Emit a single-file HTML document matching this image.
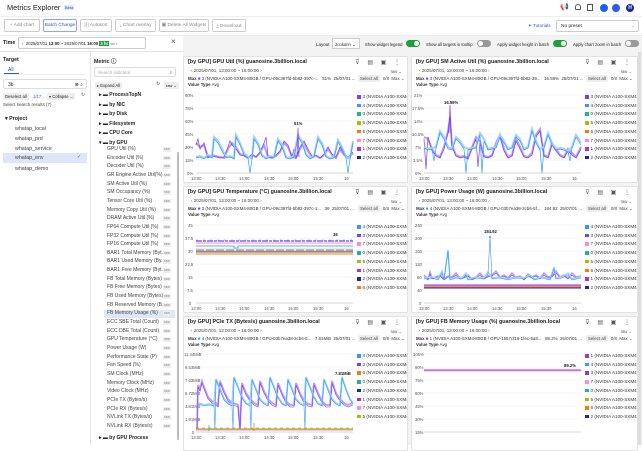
<!DOCTYPE html>
<html><head><meta charset="utf-8"><style>
*{box-sizing:border-box;margin:0;padding:0}
body{width:642px;height:445px;overflow:hidden;background:#fff;font-family:"Liberation Sans",sans-serif;color:#222;position:relative;font-size:5px}
.a{position:absolute;white-space:nowrap}
.btn{position:absolute;top:19px;height:13px;border:1px solid #ccc;border-radius:2px;font-size:4.8px;color:#888;display:flex;align-items:center;justify-content:center}
.tg{position:absolute;width:14px;height:7px;border-radius:4px;top:40px}
.tg i{position:absolute;top:1px;width:5px;height:5px;border-radius:3px;background:#fff}
.card{position:absolute;background:#fff;border:1px solid #e2e2e2;border-radius:2px;overflow:hidden}
.card .t{position:absolute;left:4px;top:2px;font-size:5.4px;font-weight:bold;color:#222;white-space:nowrap}
.card .d{position:absolute;left:7px;top:11px;font-size:4.5px;color:#444;white-space:nowrap}
.card .m{position:absolute;left:4px;top:19px;font-size:4.4px;color:#333;white-space:nowrap;width:168px;overflow:hidden}
.card .v{position:absolute;left:4px;top:25px;font-size:4.4px;color:#333}
.card .ic{position:absolute;right:4px;top:2px;font-size:6px;color:#555;letter-spacing:3px}
.card .raw{position:absolute;right:5px;top:12px;font-size:4.2px;color:#555}
.card .sel{position:absolute;left:174px;top:19px;font-size:4.4px;color:#444;white-space:nowrap}
.card .sel b{font-weight:normal;background:#eee;border-radius:2px;padding:1px 2px;margin-right:3px}
.lg{position:absolute;left:173px;font-size:4.6px;color:#333;white-space:nowrap}
.lg i{display:inline-block;width:3.5px;height:3.5px;margin-right:2px;vertical-align:-0.5px}
svg{position:absolute;left:0;top:0}
.ml{position:absolute;left:107px;width:68px;font-size:5px;color:#444;white-space:nowrap;height:8.65px;line-height:8.65px}
.ml span{position:absolute;left:56px;top:2px;font-size:3.6px;line-height:4.5px;color:#888;background:#eee;padding:0 1px}
</style></head><body>
<div class="a" style="left:7px;top:3px;font-size:7.4px;color:#222">Metrics Explorer</div>
<div class="a" style="left:64px;top:5px;font-size:4px;color:#2b55d8;background:#dfe6ff;padding:0 1px">Beta</div>
<div class="a" style="left:0;top:16px;width:642px;height:1px;background:#eee"></div>
<div class="a" style="left:560px;top:3px;font-size:7px;color:#444">&#128226;</div>
<div class="a" style="left:575px;top:4px;width:6px;height:6px;border:1px solid #555;border-radius:3px 3px 1px 1px"></div>
<div class="a" style="left:587px;top:4px;width:6px;height:7px;border:1px solid #555"></div>
<div class="a" style="left:600px;top:4px;width:8px;height:8px;border-radius:4px;background:#1f5ff0"></div>
<div class="a" style="left:612px;top:4px;width:8px;height:8px;border-radius:4px;background:#2a5cf5"></div>
<div class="a" style="left:626px;top:4px;width:8px;height:8px;border-radius:4px;background:#1a2a8c;color:#fff;font-size:5px;text-align:center;line-height:8px;font-weight:bold">H</div>
<div class="btn" style="left:4px;width:36px">+ Add chart</div>
<div class="btn" style="left:43px;width:34px;border-color:#8aa8f0;color:#2b55d8">Batch Change</div>
<div class="btn" style="left:80px;width:32px">|⟨| Autosort</div>
<div class="btn" style="left:115px;width:41px">⌞ Chart overlay</div>
<div class="btn" style="left:159px;width:50px">▣ Delete All Widgets</div>
<div class="btn" style="left:212px;width:34px">⤓ Download</div>
<div class="a" style="left:528px;top:23px;font-size:4.6px;color:#2b55d8">✦ Tutorials</div>
<div class="a" style="left:556px;top:20px;width:83px;height:12px;border:1px solid #ccc;border-radius:2px;font-size:4.8px;padding:3px 4px">No preset<span style="position:absolute;right:3px;color:#999">⌄</span></div>
<div class="a" style="left:0;top:35px;width:642px;height:1px;background:#eee"></div>
<div class="a" style="left:3px;top:40px;font-size:5.3px;font-weight:bold">Time</div>
<div class="a" style="left:18px;top:37px;width:128px;height:12px;border:1px solid #ccc;border-radius:2px;font-size:4.3px;padding:3px 3px">‹ &nbsp;2025/07/01 <b>13:00</b> ~ 2025/07/01 <b>16:00</b> <span style="background:#1ca03a;color:#fff;padding:0 1px;font-weight:bold">3 hr</span> ▭ ›</div>
<div class="a" style="left:171px;top:37px;font-size:8px;color:#555">×</div>
<div class="a" style="left:183px;top:36px;width:459px;height:409px;background:#f3f3f4"></div>
<div class="a" style="left:316px;top:42px;font-size:4.5px">Layout</div>
<div class="a" style="left:332px;top:38px;width:28px;height:11px;border:1px solid #ccc;background:#fff;font-size:4.2px;padding:3px 2px">2column ⌄</div>
<div class="a" style="left:365px;top:42px;font-size:4.2px">Show widget legend</div>
<div class="tg" style="left:406px;background:#1ca03a"><i style="left:8px"></i></div>
<div class="a" style="left:426px;top:42px;font-size:4.2px">Show all targets in tooltip</div>
<div class="tg" style="left:477px;background:#999"><i style="left:1px"></i></div>
<div class="a" style="left:497px;top:42px;font-size:4.2px">Apply widget height in batch</div>
<div class="tg" style="left:553px;background:#1ca03a"><i style="left:8px"></i></div>
<div class="a" style="left:573px;top:42px;font-size:4.2px">Apply chart zoom in batch</div>
<div class="tg" style="left:625px;background:#999"><i style="left:1px"></i></div>
<div class="a" style="left:0;top:51px;width:183px;height:1px;background:#e5e5e5"></div>
<div class="a" style="left:90px;top:52px;width:1px;height:393px;background:#e5e5e5"></div>
<div class="a" style="left:3px;top:57px;font-size:5.3px;font-weight:bold">Target</div>
<div class="a" style="left:8px;top:67px;font-size:5px;color:#2b55d8">All</div>
<div class="a" style="left:4px;top:73px;width:15px;height:1px;background:#2b55d8"></div>
<div class="a" style="left:4px;top:74px;width:82px;height:1px;background:#eee"></div>
<div class="a" style="left:3px;top:79px;width:84px;height:10px;border:1px solid #ddd;font-size:5px;padding:2px 4px;border-radius:2px">3b<span style="position:absolute;right:3px">⊗ ⌕</span></div>
<div class="a" style="left:3px;top:93px;font-size:4.2px;background:#eee;padding:1px 2px">Deselect all</div>
<div class="a" style="left:33px;top:94px;font-size:4.2px;color:#2b55d8">1/17</div>
<div class="a" style="left:47px;top:93px;font-size:4.2px;background:#eee;padding:1px 2px">▾ Collapse ...</div>
<div class="a" style="left:81px;top:92px;font-size:5px;color:#666">↻</div>
<div class="a" style="left:3px;top:102px;font-size:4.5px;color:#444">Select search results (7)</div>
<div class="a" style="left:5px;top:116px;font-size:5.3px;font-weight:bold">▾ Project</div>
<div class="a" style="left:15px;top:126px;font-size:5.3px;color:#444">whatap_local</div>
<div class="a" style="left:15px;top:136px;font-size:5.3px;color:#444">whatap_prd</div>
<div class="a" style="left:15px;top:146px;font-size:5.3px;color:#444">whatap_service</div>
<div class="a" style="left:3px;top:153px;width:84px;height:10px;background:#dfe6fb"></div>
<div class="a" style="left:15px;top:155px;font-size:5.3px;color:#444">whatap_env</div>
<div class="a" style="left:77px;top:154px;font-size:5px;color:#2b55d8">✓</div>
<div class="a" style="left:15px;top:166px;font-size:5.3px;color:#444">whatap_demo</div>
<div class="a" style="left:94px;top:57px;font-size:5.3px;font-weight:bold">Metric ⓘ</div>
<div class="a" style="left:94px;top:67px;width:82px;height:10px;border:1px solid #ddd;border-radius:2px;font-size:4.5px;color:#aaa;padding:2px 3px">Search indicator<span style="position:absolute;right:3px;color:#555">⌕</span></div>
<div class="a" style="left:95px;top:82px;font-size:4.2px;background:#eee;padding:1px 2px">▸ Expand All</div>
<div class="a" style="left:156px;top:81px;font-size:5px;color:#666">↻</div>
<div class="a" style="left:164px;top:82px;font-size:4px;background:#eee;padding:1px 2px">raw ⌄</div>
<div class="a" style="left:99px;top:91px;font-size:5px;font-weight:bold;line-height:9.5px">▸ ▬ ProcessTopN<br>▸ ▬ by NIC<br>▸ ▬ by Disk<br>▸ ▬ Filesystem<br>▸ ▬ CPU Core<br>▾ ▬ by GPU</div>
<div class="a" style="left:177px;top:152px;width:2px;height:288px;background:#bbb;border-radius:1px"></div>
<div class="a" style="left:104px;top:310px;width:71px;height:8px;background:#dfe6fb"></div>
<div class="ml" style="top:145px">GPU Util (%)<span>raw</span></div>
<div class="ml" style="top:153.65px">Encoder Util (%)<span>raw</span></div>
<div class="ml" style="top:162.3px">Decoder Util (%)<span>raw</span></div>
<div class="ml" style="top:170.95px">GR Engine Active Util(%)<span>raw</span></div>
<div class="ml" style="top:179.6px">SM Active Util (%)<span>raw</span></div>
<div class="ml" style="top:188.25px">SM Occupancy (%)<span>raw</span></div>
<div class="ml" style="top:196.9px">Tensor Core Util (%)<span>raw</span></div>
<div class="ml" style="top:205.55px">Memory Copy Util (%)<span>raw</span></div>
<div class="ml" style="top:214.2px">DRAM Active Util (%)<span>raw</span></div>
<div class="ml" style="top:222.85px">FP64 Compute Util (%)<span>raw</span></div>
<div class="ml" style="top:231.5px">FP32 Compute Util (%)<span>raw</span></div>
<div class="ml" style="top:240.15px">FP16 Compute Util (%)<span>raw</span></div>
<div class="ml" style="top:248.8px">BAR1 Total Memory (Byt...<span>raw</span></div>
<div class="ml" style="top:257.45px">BAR1 Used Memory (By...<span>raw</span></div>
<div class="ml" style="top:266.1px">BAR1 Free Memory (Byt...<span>raw</span></div>
<div class="ml" style="top:274.75px">FB Total Memory (Bytes)<span>raw</span></div>
<div class="ml" style="top:283.4px">FB Free Memory (Bytes)<span>raw</span></div>
<div class="ml" style="top:292.05px">FB Used Memory (Bytes)<span>raw</span></div>
<div class="ml" style="top:300.7px">FB Reserved Memory (B...<span>raw</span></div>
<div class="ml" style="top:309.35px">FB Memory Usage (%)<span>raw</span></div>
<div class="ml" style="top:318px">ECC SBE Total (Count)<span>raw</span></div>
<div class="ml" style="top:326.65px">ECC DBE Total (Count)<span>raw</span></div>
<div class="ml" style="top:335.3px">GPU Temperature (°C)<span>raw</span></div>
<div class="ml" style="top:343.95px">Power Usage (W)<span>raw</span></div>
<div class="ml" style="top:352.6px">Performance State (P)<span>raw</span></div>
<div class="ml" style="top:361.25px">Fan Speed (%)<span>raw</span></div>
<div class="ml" style="top:369.9px">SM Clock (MHz)<span>raw</span></div>
<div class="ml" style="top:378.55px">Memory Clock (MHz)<span>raw</span></div>
<div class="ml" style="top:387.2px">Video Clock (MHz)<span>raw</span></div>
<div class="ml" style="top:395.85px">PCIe TX (Bytes/s)<span>raw</span></div>
<div class="ml" style="top:404.5px">PCIe RX (Bytes/s)<span>raw</span></div>
<div class="ml" style="top:413.15px">NVLink TX (Bytes/s)<span>raw</span></div>
<div class="ml" style="top:421.8px">NVLink RX (Bytes/s)<span>raw</span></div>
<div class="a" style="left:99px;top:435px;font-size:5px;font-weight:bold">▸ ▬ by GPU Process</div>

<!-- CARD 1 -->
<div class="card" style="left:183px;top:56px;width:225px;height:127px">
<div class="t">[by GPU] GPU Util (%) guanosine.3billion.local</div><div class="ic">⊽ ▤ ▣ ⋮</div>
<div class="d">‹ 2025/07/01, 13:00:00 ~ 16:00:00 ›</div><div class="raw">raw ⌄</div>
<div class="m"><b>Max</b> <span style="color:#7b3ff2">■</span> 3 (NVIDIA A100-SXM4-80GB / GPU-09c397fd-5b82-397c-... &nbsp; 51% &nbsp;25/07/01 ...</div>
<div class="v"><b>Value Type</b> Avg</div>
<div class="sel"><b>Select all</b>0/8 &nbsp;Max ⌄</div>
<svg width="225" height="127" font-size="4.2" fill="#555" font-family="Liberation Sans">
<g stroke="#eee" stroke-width=".5"><line x1="12" y1="38" x2="169" y2="38"/><line x1="12" y1="51" x2="169" y2="51"/><line x1="12" y1="64" x2="169" y2="64"/><line x1="12" y1="77" x2="169" y2="77"/><line x1="12" y1="90" x2="169" y2="90"/><line x1="12" y1="103" x2="169" y2="103"/></g>
<line x1="12" y1="116" x2="169" y2="116" stroke="#aaa" stroke-width=".5"/>
<g><text x="1" y="40">90%</text><text x="1" y="53">75%</text><text x="1" y="66">60%</text><text x="1" y="79">45%</text><text x="1" y="92">30%</text><text x="1" y="105">15%</text><text x="3" y="118">0%</text>
<text x="7" y="123">13:00</text><text x="31" y="123">13:30</text><text x="55" y="123">14:00</text><text x="80" y="123">14:30</text><text x="104" y="123">15:00</text><text x="129" y="123">15:30</text><text x="160" y="123">16</text></g>
<polyline fill="none" stroke="#b89af8" stroke-width="2" points="12,86 16,90 20,88 24,100 28,98 32,99 36,100 40,101 44,92 48,86 52,90 56,97 60,98 64,101 68,98 72,100 76,96 80,88 84,100 88,101 92,99 96,95 100,86 104,90 108,100 112,101 116,92 120,86 124,94 128,100 132,99 136,101 140,98 144,92 148,98 152,101 156,92 160,98 164,101 169,96"/>
<polyline fill="none" stroke="#7b3ff2" stroke-width=".7" points="12,88 14,82 16,92 20,86 24,101 28,99 32,100 36,101 40,100 44,90 46,84 48,88 52,92 56,98 60,99 64,101 68,97 72,100 76,95 80,86 82,80 84,99 88,101 92,98 96,94 100,84 104,88 108,100 110,92 112,101 116,90 120,84 124,92 128,99 132,98 136,101 140,97 144,90 148,97 152,100 156,90 160,97 164,100 169,95"/>
<polyline fill="none" stroke="#9fd0ff" stroke-width="2" points="12,100 16,99 20,101 24,98 28,100 30,80 34,84 38,92 42,100 46,99 50,101 52,78 56,86 60,96 64,100 68,101 70,80 74,86 78,98 82,101 86,99 90,100 94,82 98,88 102,100 106,101 110,99 114,78 118,84 122,97 126,101 130,99 134,80 138,86 142,99 146,101 150,100 154,83 158,90 162,100 166,101 169,84"/>
<polyline fill="none" stroke="#2f9bff" stroke-width=".7" points="12,101 16,100 20,102 24,99 28,101 30,82 34,86 38,94 42,101 46,100 50,102 52,80 56,88 60,98 64,101 66,116 68,102 70,82 74,88 78,99 82,102 86,100 90,101 94,84 98,90 102,101 106,102 110,100 114,80 118,86 122,98 126,102 130,100 134,82 138,88 142,100 146,102 150,101 154,85 158,92 162,101 164,116 166,102 169,86"/>
<polyline fill="none" stroke="#7b3ff2" stroke-width=".7" points="113,100 114,71 115,100"/>
<text x="110" y="68" fill="#222" font-weight="bold">51%</text>
</svg>
<div class="lg" style="top:36px;line-height:8.7px"><i style="background:#7b3ff2"></i>3 (NVIDIA A100-SXM4...<br><i style="background:#2f9bff"></i>4 (NVIDIA A100-SXM4...<br><i style="background:#19b3a8"></i>0 (NVIDIA A100-SXM4...<br><i style="background:#b5b800"></i>5 (NVIDIA A100-SXM4...<br><i style="background:#ff7a00"></i>6 (NVIDIA A100-SXM4...<br><i style="background:#ff8ad8"></i>7 (NVIDIA A100-SXM4...<br><i style="background:#b030d0"></i>1 (NVIDIA A100-SXM4...<br><i style="background:#1a2a9a"></i>2 (NVIDIA A100-SXM4...</div>
</div>

<!-- CARD 2 -->
<div class="card" style="left:411px;top:56px;width:227px;height:127px">
<div class="t">[by GPU] SM Active Util (%) guanosine.3billion.local</div><div class="ic">⊽ ▤ ▣ ⋮</div>
<div class="d">‹ 2025/07/01, 13:00:00 ~ 16:00:00 ›</div><div class="raw">raw ⌄</div>
<div class="m"><b>Max</b> <span style="color:#7b3ff2">■</span> 3 (NVIDIA A100-SXM4-80GB / GPU-09c397fd-5b82-39... &nbsp; 16.59% &nbsp;25/07/01 ...</div>
<div class="v"><b>Value Type</b> Avg</div>
<div class="sel"><b>Select all</b>0/8 &nbsp;Max ⌄</div>
<svg width="227" height="127" font-size="4.2" fill="#555" font-family="Liberation Sans">
<g stroke="#eee" stroke-width=".5"><line x1="12" y1="38" x2="169" y2="38"/><line x1="12" y1="51" x2="169" y2="51"/><line x1="12" y1="64" x2="169" y2="64"/><line x1="12" y1="77" x2="169" y2="77"/><line x1="12" y1="90" x2="169" y2="90"/><line x1="12" y1="103" x2="169" y2="103"/></g>
<line x1="12" y1="116" x2="169" y2="116" stroke="#aaa" stroke-width=".5"/>
<g><text x="2" y="40">21%</text><text x="0" y="53">17.5%</text><text x="2" y="66">14%</text><text x="0" y="79">10.5%</text><text x="3" y="92">7%</text><text x="1" y="105">3.5%</text><text x="3" y="118">0%</text>
<text x="7" y="123">13:00</text><text x="31" y="123">13:30</text><text x="55" y="123">14:00</text><text x="80" y="123">14:30</text><text x="104" y="123">15:00</text><text x="129" y="123">15:30</text><text x="160" y="123">16</text></g>
<polyline fill="none" stroke="#b89af8" stroke-width="2" points="12,80 16,82 20,92 24,98 28,100 32,90 36,74 38,60 40,88 44,98 48,100 52,99 56,101 60,90 64,80 68,84 72,99 76,100 80,98 84,86 88,78 92,92 96,100 100,98 104,82 108,90 112,99 116,100 120,96 124,78 128,72 132,98 136,100 140,86 144,92 148,98 152,100 156,92 160,96 164,100 169,90"/>
<polyline fill="none" stroke="#7b3ff2" stroke-width=".7" points="12,82 14,112 16,80 20,94 24,99 28,101 32,92 36,76 38,58 40,90 44,99 48,101 52,100 56,102 60,92 64,82 66,110 68,86 72,100 76,101 80,99 84,88 88,80 92,94 96,101 100,99 104,84 108,92 112,100 116,101 120,98 124,80 128,74 132,99 136,101 140,88 144,94 148,99 152,101 156,94 160,98 164,101 169,92"/>
<polyline fill="none" stroke="#9fd0ff" stroke-width="2" points="12,90 16,92 20,91 24,90 28,74 32,80 36,90 40,92 44,80 48,84 52,90 56,92 60,91 64,90 68,76 72,82 76,92 80,91 84,90 88,78 92,84 96,92 100,90 104,78 108,82 112,92 116,90 120,72 124,84 128,92 132,90 136,76 140,86 144,92 148,91 152,92 156,94 160,90 164,78 169,86"/>
<polyline fill="none" stroke="#2f9bff" stroke-width=".7" points="12,91 16,93 20,92 22,104 24,91 28,76 32,82 36,92 40,93 44,82 48,86 52,92 54,116 56,93 60,92 64,91 68,78 70,116 72,84 76,93 80,92 84,91 88,80 92,86 96,93 100,91 104,80 108,84 112,93 116,91 120,74 124,86 128,93 130,116 132,91 136,78 140,88 144,93 148,92 152,93 156,95 158,104 160,91 164,80 169,88"/>
<polyline fill="none" stroke="#7b3ff2" stroke-width=".7" points="37,76 38,48 39,76"/>
<text x="32" y="47" fill="#222" font-weight="bold">16.59%</text>
</svg>
<div class="lg" style="top:36px;line-height:8.7px"><i style="background:#7b3ff2"></i>3 (NVIDIA A100-SXM4...<br><i style="background:#2f9bff"></i>4 (NVIDIA A100-SXM4...<br><i style="background:#19b3a8"></i>0 (NVIDIA A100-SXM4...<br><i style="background:#b5b800"></i>5 (NVIDIA A100-SXM4...<br><i style="background:#ff7a00"></i>6 (NVIDIA A100-SXM4...<br><i style="background:#ff8ad8"></i>7 (NVIDIA A100-SXM4...<br><i style="background:#b030d0"></i>1 (NVIDIA A100-SXM4...<br><i style="background:#1a2a9a"></i>2 (NVIDIA A100-SXM4...</div>
</div>

<!-- CARD 3 -->
<div class="card" style="left:183px;top:186px;width:225px;height:127px">
<div class="t">[by GPU] GPU Temperature (°C) guanosine.3billion.local</div><div class="ic">⊽ ▤ ▣ ⋮</div>
<div class="d">‹ 2025/07/01, 13:00:00 ~ 16:00:00 ›</div><div class="raw">raw ⌄</div>
<div class="m"><b>Max</b> <span style="color:#7b3ff2">■</span> 3 (NVIDIA A100-SXM4-80GB / GPU-09c397fd-5b82-397c-1... &nbsp; 36 &nbsp;25/07/01 ...</div>
<div class="v"><b>Value Type</b> Avg</div>
<div class="sel"><b>Select all</b>0/8 &nbsp;Max ⌄</div>
<svg width="225" height="127" font-size="4.2" fill="#555" font-family="Liberation Sans">
<g stroke="#eee" stroke-width=".5"><line x1="12" y1="38" x2="169" y2="38"/><line x1="12" y1="51" x2="169" y2="51"/><line x1="12" y1="64" x2="169" y2="64"/><line x1="12" y1="77" x2="169" y2="77"/><line x1="12" y1="90" x2="169" y2="90"/><line x1="12" y1="103" x2="169" y2="103"/></g>
<line x1="12" y1="116" x2="169" y2="116" stroke="#aaa" stroke-width=".5"/>
<g><text x="4" y="40">45</text><text x="1" y="53">37.5</text><text x="4" y="66">30</text><text x="1" y="79">22.5</text><text x="4" y="92">15</text><text x="3" y="105">7.5</text><text x="5" y="118">0</text>
<text x="7" y="123">13:00</text><text x="31" y="123">13:30</text><text x="55" y="123">14:00</text><text x="80" y="123">14:30</text><text x="104" y="123">15:00</text><text x="129" y="123">15:30</text><text x="160" y="123">16</text></g>
<path d="M12 54H169" stroke="#7b3ff2" stroke-width="1.2" stroke-dasharray="6 1 3 1"/>
<path d="M12 53H169" stroke="#2f9bff" stroke-width=".6" stroke-dasharray="2 5"/>
<path d="M12 56H169" stroke="#ff8ad8" stroke-width="1"/>
<path d="M12 59H50V61H54V59H169" stroke="#19b3a8" stroke-width=".8" fill="none"/>
<path d="M12 64H169" stroke="#b5b800" stroke-width=".8"/>
<path d="M12 63H169" stroke="#b030d0" stroke-width=".8" stroke-dasharray="8 2"/>
<path d="M12 65H169" stroke="#1a2a9a" stroke-width=".8"/>
<path d="M12 67H169" stroke="#ff7a00" stroke-width="1"/>
<path d="M12 62H169" stroke="#c8c8f0" stroke-width="1.5" opacity=".6"/>
<text x="149" y="49" fill="#222" font-weight="bold">36</text>
</svg>
<div class="lg" style="top:36px;line-height:8.7px"><i style="background:#2f9bff"></i>4 (NVIDIA A100-SXM4...<br><i style="background:#7b3ff2"></i>3 (NVIDIA A100-SXM4...<br><i style="background:#ff8ad8"></i>7 (NVIDIA A100-SXM4...<br><i style="background:#19b3a8"></i>0 (NVIDIA A100-SXM4...<br><i style="background:#b5b800"></i>5 (NVIDIA A100-SXM4...<br><i style="background:#b030d0"></i>1 (NVIDIA A100-SXM4...<br><i style="background:#1a2a9a"></i>2 (NVIDIA A100-SXM4...<br><i style="background:#ff7a00"></i>6 (NVIDIA A100-SXM4...</div>
</div>

<!-- CARD 4 -->
<div class="card" style="left:411px;top:186px;width:227px;height:127px">
<div class="t">[by GPU] Power Usage (W) guanosine.3billion.local</div><div class="ic">⊽ ▤ ▣ ⋮</div>
<div class="d">‹ 2025/07/01, 13:00:00 ~ 16:00:00 ›</div><div class="raw">raw ⌄</div>
<div class="m"><b>Max</b> <span style="color:#2f9bff">■</span> 4 (NVIDIA A100-SXM4-80GB / GPU-03b7ea38-3cb6-5f... &nbsp; 184.92 &nbsp;25/07/01 ...</div>
<div class="v"><b>Value Type</b> Avg</div>
<div class="sel"><b>Select all</b>0/8 &nbsp;Max ⌄</div>
<svg width="227" height="127" font-size="4.2" fill="#555" font-family="Liberation Sans">
<g stroke="#eee" stroke-width=".5"><line x1="12" y1="38" x2="169" y2="38"/><line x1="12" y1="51" x2="169" y2="51"/><line x1="12" y1="64" x2="169" y2="64"/><line x1="12" y1="77" x2="169" y2="77"/><line x1="12" y1="90" x2="169" y2="90"/><line x1="12" y1="103" x2="169" y2="103"/></g>
<line x1="12" y1="116" x2="169" y2="116" stroke="#aaa" stroke-width=".5"/>
<g><text x="3" y="40">240</text><text x="3" y="53">200</text><text x="3" y="66">160</text><text x="3" y="79">120</text><text x="5" y="92">80</text><text x="5" y="105">40</text><text x="7" y="118">0</text>
<text x="7" y="123">13:00</text><text x="31" y="123">13:30</text><text x="55" y="123">14:00</text><text x="80" y="123">14:30</text><text x="104" y="123">15:00</text><text x="129" y="123">15:30</text><text x="160" y="123">16</text></g>
<path d="M12 98H169" stroke="#7b3ff2" stroke-width="1"/>
<path d="M12 99H169" stroke="#ff8ad8" stroke-width="1"/>
<path d="M12 100H169" stroke="#ff7a00" stroke-width="1"/>
<path d="M12 101H169" stroke="#1a2a9a" stroke-width="1"/>
<polyline fill="none" stroke="#b89af8" stroke-width="1.5" points="12,88 16,92 18,85 20,91 24,90 28,88 32,92 36,89 40,90 44,86 48,91 52,90 56,88 60,92 64,90 68,86 72,91 76,89 80,88 84,84 88,90 92,88 96,91 100,86 104,90 108,89 112,92 116,87 120,90 124,88 128,91 132,86 136,90 140,89 144,84 148,90 152,88 156,91 160,86 164,90 169,89"/>
<polyline fill="none" stroke="#7b3ff2" stroke-width=".6" points="12,90 16,93 18,87 20,92 24,91 28,89 32,93 36,90 40,91 44,88 48,92 52,91 56,89 60,93 64,91 68,88 72,92 76,90 80,89 84,86 88,91 92,89 96,92 100,88 104,91 108,90 112,93 116,89 120,91 124,89 128,92 132,88 136,91 140,90 144,86 148,91 152,89 156,92 160,88 164,91 169,90"/>
<polyline fill="none" stroke="#9fd0ff" stroke-width="1.5" points="12,91 20,90 26,92 30,84 32,92 36,63 38,92 44,90 50,91 54,86 56,92 64,90 72,91 76,85 80,91 88,90 96,92 104,90 112,91 118,88 122,92 130,90 138,92 142,80 144,91 150,90 156,86 160,92 169,90"/>
<polyline fill="none" stroke="#2f9bff" stroke-width=".6" points="12,92 20,91 26,93 30,86 32,93 36,64 38,93 44,91 50,92 54,88 56,93 64,91 72,92 74,90 76,87 78,50 80,92 88,91 96,93 104,91 112,92 118,89 122,93 130,91 138,93 142,82 144,92 150,91 156,88 160,93 169,91"/>
<circle cx="78" cy="50" r="1" fill="#2f9bff"/>
<text x="72" y="46" fill="#222" font-weight="bold">184.92</text>
</svg>
<div class="lg" style="top:36px;line-height:8.7px"><i style="background:#2f9bff"></i>4 (NVIDIA A100-SXM4...<br><i style="background:#7b3ff2"></i>3 (NVIDIA A100-SXM4...<br><i style="background:#ff8ad8"></i>7 (NVIDIA A100-SXM4...<br><i style="background:#19b3a8"></i>0 (NVIDIA A100-SXM4...<br><i style="background:#b5b800"></i>5 (NVIDIA A100-SXM4...<br><i style="background:#ff7a00"></i>6 (NVIDIA A100-SXM4...<br><i style="background:#b030d0"></i>1 (NVIDIA A100-SXM4...<br><i style="background:#1a2a9a"></i>2 (NVIDIA A100-SXM4...</div>
</div>

<!-- CARD 5 -->
<div class="card" style="left:183px;top:316px;width:225px;height:135px">
<div class="t">[by GPU] PCIe TX (Bytes/s) guanosine.3billion.local</div><div class="ic">⊽ ▤ ▣ ⋮</div>
<div class="d">‹ 2025/07/01, 13:00:00 ~ 16:00:00 ›</div><div class="raw">raw ⌄</div>
<div class="m"><b>Max</b> <span style="color:#2f9bff">■</span> 4 (NVIDIA A100-SXM4-80GB / GPU-03b7ea38-3cb6-5... &nbsp; 7.81MiB &nbsp;25/07/01 ...</div>
<div class="v"><b>Value Type</b> Avg</div>
<div class="sel"><b>Select all</b>0/8 &nbsp;Max ⌄</div>
<svg width="225" height="135" font-size="4.2" fill="#555" font-family="Liberation Sans">
<g stroke="#eee" stroke-width=".5"><line x1="12" y1="37" x2="169" y2="37"/><line x1="12" y1="50" x2="169" y2="50"/><line x1="12" y1="63" x2="169" y2="63"/><line x1="12" y1="76" x2="169" y2="76"/><line x1="12" y1="89" x2="169" y2="89"/><line x1="12" y1="102" x2="169" y2="102"/></g>
<line x1="12" y1="115" x2="169" y2="115" stroke="#aaa" stroke-width=".5"/>
<g><text x="0" y="39">11.44MiB</text><text x="1" y="52">9.53MiB</text><text x="1" y="65">7.63MiB</text><text x="1" y="78">5.72MiB</text><text x="1" y="91">3.81MiB</text><text x="1" y="104">1.91MiB</text><text x="8" y="117">0</text>
<text x="7" y="122">13:00</text><text x="31" y="122">13:30</text><text x="55" y="122">14:00</text><text x="80" y="122">14:30</text><text x="104" y="122">15:00</text><text x="129" y="122">15:30</text><text x="160" y="122">16</text></g>
<polyline fill="none" stroke="#b89af8" stroke-width="1.8" points="13,112 14,68 16,72 18,64 20,70 24,80 28,84 32,86 34,88 36,64 40,74 44,82 48,86 52,87 54,88 56,112 58,66 62,76 66,82 70,86 74,88 76,64 80,74 84,82 88,86 92,88 94,66 98,76 102,84 106,88 110,88 112,66 116,76 120,84 124,87 128,88 130,66 134,76 138,84 142,88 146,88 148,64 152,76 156,82 160,86 164,88 169,86"/>
<polyline fill="none" stroke="#7b3ff2" stroke-width=".6" points="13,112 14,70 16,74 18,66 20,72 24,82 28,86 32,88 34,90 36,66 40,76 44,84 48,88 52,89 54,90 56,112 58,68 62,78 66,84 70,88 74,90 76,66 80,76 84,84 88,88 92,90 94,68 98,78 102,86 106,90 110,90 112,68 116,78 120,86 124,89 128,90 130,68 134,78 138,86 142,90 146,90 148,66 152,78 156,84 160,88 164,90 169,88"/>
<polyline fill="none" stroke="#9fd0ff" stroke-width="1.8" points="14,86 20,88 26,87 30,88 32,62 36,72 40,82 44,86 48,88 50,60 54,70 58,80 62,86 66,88 68,62 72,72 76,82 80,86 84,88 86,60 90,70 94,80 98,86 102,88 104,62 108,72 112,82 116,86 120,88 122,60 126,70 130,80 134,86 138,88 140,62 144,72 148,82 152,86 156,88 158,60 162,72 166,82 169,86"/>
<polyline fill="none" stroke="#2f9bff" stroke-width=".6" points="14,87 20,89 26,88 30,89 31,112 32,63 36,73 40,83 44,87 48,89 49,112 50,61 54,71 58,81 62,87 66,89 67,112 68,63 72,73 76,83 80,87 84,89 86,61 90,71 94,81 98,87 102,89 104,63 108,73 112,83 116,87 120,89 121,112 122,61 126,71 130,81 134,87 138,89 140,63 144,73 148,83 152,87 156,89 158,61 162,73 166,83 169,87"/>
<path d="M12 112H169" stroke="#b5b800" stroke-width="1.2"/>
<path d="M12 113H169" stroke="#ff8ad8" stroke-width="1"/>
<path d="M12 111H169" stroke="#19b3a8" stroke-width=".6" stroke-dasharray="3 3"/>
<line x1="25" y1="114" x2="25" y2="108" stroke="#19b3a8" stroke-width=".7"/>
<line x1="70" y1="114" x2="70" y2="106" stroke="#ff7a00" stroke-width=".8"/>
<text x="151" y="58" fill="#222" font-weight="bold">7.81MiB</text>
</svg>
<div class="lg" style="top:35px;line-height:8.7px"><i style="background:#2f9bff"></i>4 (NVIDIA A100-SXM4...<br><i style="background:#7b3ff2"></i>3 (NVIDIA A100-SXM4...<br><i style="background:#ff7a00"></i>6 (NVIDIA A100-SXM4...<br><i style="background:#19b3a8"></i>0 (NVIDIA A100-SXM4...<br><i style="background:#1a2a9a"></i>2 (NVIDIA A100-SXM4...<br><i style="background:#b030d0"></i>1 (NVIDIA A100-SXM4...<br><i style="background:#ff8ad8"></i>7 (NVIDIA A100-SXM4...<br><i style="background:#b5b800"></i>5 (NVIDIA A100-SXM4...</div>
</div>

<!-- CARD 6 -->
<div class="card" style="left:411px;top:316px;width:227px;height:135px">
<div class="t">[by GPU] FB Memory Usage (%) guanosine.3billion.local</div><div class="ic">⊽ ▤ ▣ ⋮</div>
<div class="d">‹ 2025/07/01, 13:00:00 ~ 16:00:00 ›</div><div class="raw">raw ⌄</div>
<div class="m"><b>Max</b> <span style="color:#b030d0">■</span> 1 (NVIDIA A100-SXM4-80GB / GPU-1557cf16-1fec-5a8... &nbsp; 89.2% &nbsp;25/07/01 ...</div>
<div class="v"><b>Value Type</b> Avg</div>
<div class="sel"><b>Select all</b>0/8 &nbsp;Max ⌄</div>
<svg width="227" height="135" font-size="4.2" fill="#555" font-family="Liberation Sans">
<g stroke="#eee" stroke-width=".5"><line x1="12" y1="37" x2="169" y2="37"/><line x1="12" y1="50" x2="169" y2="50"/><line x1="12" y1="63" x2="169" y2="63"/><line x1="12" y1="76" x2="169" y2="76"/><line x1="12" y1="89" x2="169" y2="89"/><line x1="12" y1="102" x2="169" y2="102"/></g>
<line x1="12" y1="115" x2="169" y2="115" stroke="#aaa" stroke-width=".5"/>
<g><text x="1" y="39">105%</text><text x="3" y="52">90%</text><text x="3" y="65">75%</text><text x="3" y="78">60%</text><text x="3" y="91">45%</text><text x="3" y="104">30%</text><text x="3" y="117">15%</text></g>
<path d="M12 53H169" stroke="#b030d0" stroke-width="1"/>
<path d="M12 54H169" stroke="#ff8ad8" stroke-width=".8"/>
<text x="152" y="50" fill="#222" font-weight="bold">89.2%</text>
</svg>
<div class="lg" style="top:35px;line-height:8.7px"><i style="background:#b030d0"></i>1 (NVIDIA A100-SXM4...<br><i style="background:#2f9bff"></i>4 (NVIDIA A100-SXM4...<br><i style="background:#7b3ff2"></i>3 (NVIDIA A100-SXM4...<br><i style="background:#ff8ad8"></i>7 (NVIDIA A100-SXM4...<br><i style="background:#19b3a8"></i>0 (NVIDIA A100-SXM4...<br><i style="background:#b5b800"></i>5 (NVIDIA A100-SXM4...<br><i style="background:#ff7a00"></i>6 (NVIDIA A100-SXM4...<br><i style="background:#1a2a9a"></i>2 (NVIDIA A100-SXM4...</div>
</div>
<div class="a" style="left:638px;top:52px;width:3px;height:393px;background:#ddd"></div>
</body></html>
